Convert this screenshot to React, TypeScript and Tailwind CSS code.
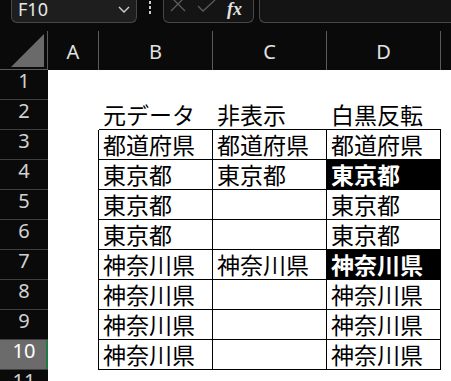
import React from "react";

type Cell = { t: string; inv?: boolean };
const data: Cell[][] = [
  [{ t: "" }, { t: "" }, { t: "" }],
  [{ t: "元データ" }, { t: "非表示" }, { t: "白黒反転" }],
  [{ t: "都道府県" }, { t: "都道府県" }, { t: "都道府県" }],
  [{ t: "東京都" }, { t: "東京都" }, { t: "東京都", inv: true }],
  [{ t: "東京都" }, { t: "" }, { t: "東京都" }],
  [{ t: "東京都" }, { t: "" }, { t: "東京都" }],
  [{ t: "神奈川県" }, { t: "神奈川県" }, { t: "神奈川県", inv: true }],
  [{ t: "神奈川県" }, { t: "" }, { t: "神奈川県" }],
  [{ t: "神奈川県" }, { t: "" }, { t: "神奈川県" }],
  [{ t: "神奈川県" }, { t: "" }, { t: "神奈川県" }],
  [{ t: "" }, { t: "" }, { t: "" }],
];

function RowHeader({ n, sel }: { n: number; sel?: boolean }) {
  return (
    <div
      className={
        "relative w-[48px] shrink-0 h-full flex justify-center border-b border-[#3f3f3f] " +
        (sel ? "bg-[#6b6b6b] text-white" : "bg-[#0a0a0a] text-[#d2d2d2]")
      }
    >
      <span className="text-[20px] leading-[20px] pt-[1px] font-['Noto_Sans',sans-serif]">{n}</span>
      {sel && <div className="absolute right-0 top-0 bottom-0 w-[2px] bg-[#1f7a45]" />}
    </div>
  );
}

export default function App() {
  return (
    <div className="w-[451px] h-[381px] bg-[#0a0a0a] overflow-hidden flex flex-col font-['Noto_Sans',sans-serif]">
      {/* formula bar */}
      <div className="h-[23px] flex shrink-0">
        <div className="ml-[11px] w-[126px] h-[23px] bg-[#1e1e1e] border-x border-b border-[#474747] rounded-b-[6px] flex items-end justify-between pl-[6px] pr-[6px] pb-[4px]">
          <span className="text-[#e8e8e8] text-[18px] leading-[18px]">F10</span>
          <svg width="12" height="7" viewBox="0 0 12 7" className="mb-[5px]">
            <polyline points="1,1 6,6 11,1" fill="none" stroke="#d0d0d0" strokeWidth="1.4" />
          </svg>
        </div>
        <div className="w-[26px] flex flex-col items-center gap-[2.5px] pt-[1px]">
          <div className="w-[2px] h-[2.5px] bg-[#cfcfcf]" />
          <div className="w-[2px] h-[2.5px] bg-[#cfcfcf]" />
          <div className="w-[2px] h-[2.5px] bg-[#cfcfcf]" />
        </div>
        <div className="w-[91px] h-[23px] bg-[#141414] border-x border-b border-[#474747] rounded-b-[6px] flex items-end pl-[6px] pb-[10px] gap-[11px]">
          <svg width="16" height="16" viewBox="0 0 16 16">
            <path d="M1 1 L15 15 M15 1 L1 15" stroke="#5c5c5c" strokeWidth="1.3" fill="none" />
          </svg>
          <svg width="19" height="12" viewBox="0 0 19 12">
            <polyline points="1,6 6,11 18,0" stroke="#5c5c5c" strokeWidth="1.3" fill="none" />
          </svg>
          <span className="text-[#e4e4e4] text-[18px] leading-[14px] italic font-bold font-['Liberation_Serif',serif] -mb-[4px]">fx</span>
        </div>
        <div className="ml-[5px] flex-1 h-[23px] bg-[#141414] border-l border-b border-[#474747] rounded-bl-[6px]" />
      </div>

      {/* column headers */}
      <div className="mt-[8px] h-[39px] flex shrink-0">
        <div className="w-[48px] shrink-0 border-r border-b border-[#5a5a5a] relative">
          <svg width="33" height="33" viewBox="0 0 33 33" className="absolute left-[11px] top-[3px]">
            <polygon points="33,0 33,33 0,33" fill="#6a6a6a" />
          </svg>
        </div>
        {[
          { k: "A", w: "w-[51px]" },
          { k: "B", w: "w-[114px]" },
          { k: "C", w: "w-[114px]" },
          { k: "D", w: "w-[114px]" },
        ].map((c) => (
          <div
            key={c.k}
            className={c.w + " shrink-0 border-r border-[#5a5a5a] flex items-center justify-center text-[#e2e2e2] text-[20px] leading-[20px] pt-[3px]"}
          >
            {c.k}
          </div>
        ))}
        <div className="flex-1" />
      </div>

      {/* grid rows */}
      {data.map((row, i) => {
        const n = i + 1;
        const inTable = n >= 3 && n <= 10;
        const topLine = n >= 2 && n <= 10;
        return (
          <div key={n} className="h-[30px] flex shrink-0">
            <RowHeader n={n} sel={n === 10} />
            <div className={"w-[51px] shrink-0 bg-white " + (inTable ? "border-r border-black" : "")} />
            {row.map((c, j) => (
              <div
                key={j}
                className={
                  "w-[114px] shrink-0 flex items-end pl-[4px] pb-[3px] text-[23px] leading-[24px] font-['Noto_Sans_CJK_JP',sans-serif] whitespace-nowrap " +
                  (topLine ? "border-b border-black " : "") +
                  (inTable ? "border-r border-black " : "") +
                  (c.inv ? "bg-black text-white font-bold" : "bg-white text-black")
                }
              >
                <span>{c.t}</span>
              </div>
            ))}
            <div className="flex-1 bg-white" />
          </div>
        );
      })}
    </div>
  );
}
